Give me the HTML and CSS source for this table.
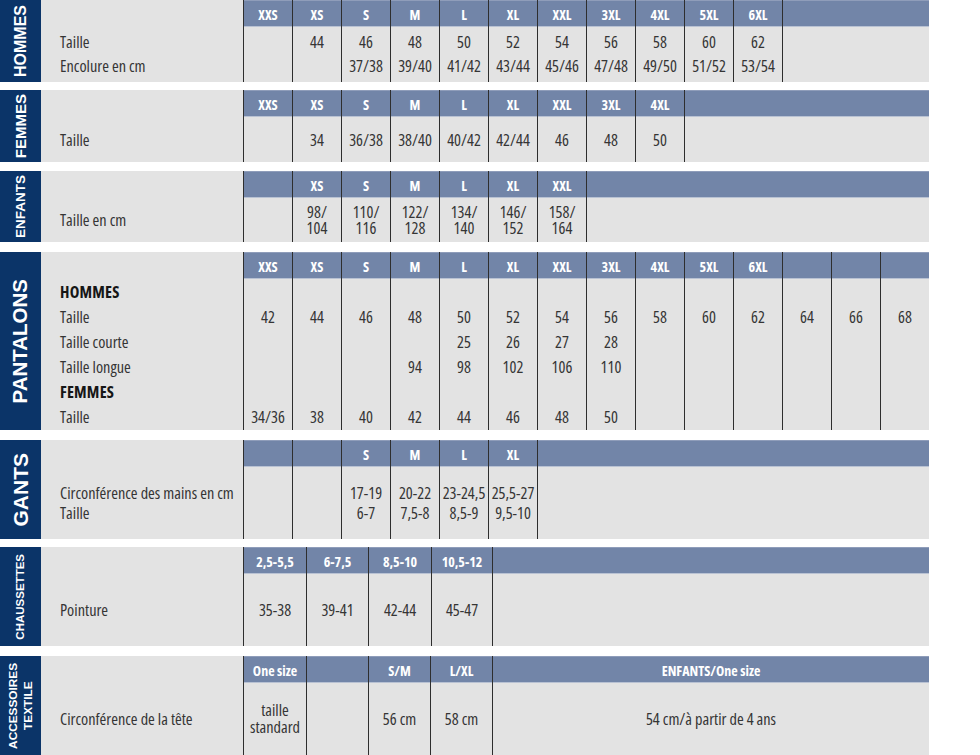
FILE: index.html
```html
<!DOCTYPE html>
<html lang="fr">
<head>
<meta charset="utf-8">
<title>Tableau des tailles</title>
<link rel="stylesheet" href="styles.css">
</head>
<body>
<div class="chart">

  <section class="sec s1">
    <div class="side"><span class="t-hommes">HOMMES</span></div>
    <div class="lab"><div class="h"></div><div class="b r24"><div class="r">Taille</div><div class="r">Encolure en cm</div></div></div>
    <div class="col"><div class="h">XXS</div><div class="b r24"><div class="r"></div><div class="r"></div></div></div>
    <div class="col"><div class="h">XS</div><div class="b r24"><div class="r">44</div><div class="r"></div></div></div>
    <div class="col"><div class="h">S</div><div class="b r24"><div class="r">46</div><div class="r">37/38</div></div></div>
    <div class="col"><div class="h">M</div><div class="b r24"><div class="r">48</div><div class="r">39/40</div></div></div>
    <div class="col"><div class="h">L</div><div class="b r24"><div class="r">50</div><div class="r">41/42</div></div></div>
    <div class="col"><div class="h">XL</div><div class="b r24"><div class="r">52</div><div class="r">43/44</div></div></div>
    <div class="col"><div class="h">XXL</div><div class="b r24"><div class="r">54</div><div class="r">45/46</div></div></div>
    <div class="col"><div class="h">3XL</div><div class="b r24"><div class="r">56</div><div class="r">47/48</div></div></div>
    <div class="col"><div class="h">4XL</div><div class="b r24"><div class="r">58</div><div class="r">49/50</div></div></div>
    <div class="col"><div class="h">5XL</div><div class="b r24"><div class="r">60</div><div class="r">51/52</div></div></div>
    <div class="col"><div class="h">6XL</div><div class="b r24"><div class="r">62</div><div class="r">53/54</div></div></div>
    <div class="col fill"><div class="h"></div><div class="b"></div></div>
  </section>

  <section class="sec s2">
    <div class="side"><span class="t-femmes">FEMMES</span></div>
    <div class="lab"><div class="h"></div><div class="b"><div class="r">Taille</div></div></div>
    <div class="col"><div class="h">XXS</div><div class="b"><div class="r"></div></div></div>
    <div class="col"><div class="h">XS</div><div class="b"><div class="r">34</div></div></div>
    <div class="col"><div class="h">S</div><div class="b"><div class="r">36/38</div></div></div>
    <div class="col"><div class="h">M</div><div class="b"><div class="r">38/40</div></div></div>
    <div class="col"><div class="h">L</div><div class="b"><div class="r">40/42</div></div></div>
    <div class="col"><div class="h">XL</div><div class="b"><div class="r">42/44</div></div></div>
    <div class="col"><div class="h">XXL</div><div class="b"><div class="r">46</div></div></div>
    <div class="col"><div class="h">3XL</div><div class="b"><div class="r">48</div></div></div>
    <div class="col"><div class="h">4XL</div><div class="b"><div class="r">50</div></div></div>
    <div class="col fill"><div class="h"></div><div class="b"></div></div>
  </section>

  <section class="sec s3">
    <div class="side"><span class="t-enfants">ENFANTS</span></div>
    <div class="lab"><div class="h"></div><div class="b"><div class="r">Taille en cm</div></div></div>
    <div class="col"><div class="h"></div><div class="b"></div></div>
    <div class="col"><div class="h">XS</div><div class="b"><div class="two">98/<br>104</div></div></div>
    <div class="col"><div class="h">S</div><div class="b"><div class="two">110/<br>116</div></div></div>
    <div class="col"><div class="h">M</div><div class="b"><div class="two">122/<br>128</div></div></div>
    <div class="col"><div class="h">L</div><div class="b"><div class="two">134/<br>140</div></div></div>
    <div class="col"><div class="h">XL</div><div class="b"><div class="two">146/<br>152</div></div></div>
    <div class="col"><div class="h">XXL</div><div class="b"><div class="two">158/<br>164</div></div></div>
    <div class="col fill"><div class="h"></div><div class="b"></div></div>
  </section>

  <section class="sec s4">
    <div class="side"><span class="t-pantalons">PANTALONS</span></div>
    <div class="lab"><div class="h"></div><div class="b r25"><div class="r strong">HOMMES</div><div class="r">Taille</div><div class="r">Taille courte</div><div class="r">Taille longue</div><div class="r strong">FEMMES</div><div class="r">Taille</div></div></div>
    <div class="col"><div class="h">XXS</div><div class="b r25"><div class="r"></div><div class="r">42</div><div class="r"></div><div class="r"></div><div class="r"></div><div class="r">34/36</div></div></div>
    <div class="col"><div class="h">XS</div><div class="b r25"><div class="r"></div><div class="r">44</div><div class="r"></div><div class="r"></div><div class="r"></div><div class="r">38</div></div></div>
    <div class="col"><div class="h">S</div><div class="b r25"><div class="r"></div><div class="r">46</div><div class="r"></div><div class="r"></div><div class="r"></div><div class="r">40</div></div></div>
    <div class="col"><div class="h">M</div><div class="b r25"><div class="r"></div><div class="r">48</div><div class="r"></div><div class="r">94</div><div class="r"></div><div class="r">42</div></div></div>
    <div class="col"><div class="h">L</div><div class="b r25"><div class="r"></div><div class="r">50</div><div class="r">25</div><div class="r">98</div><div class="r"></div><div class="r">44</div></div></div>
    <div class="col"><div class="h">XL</div><div class="b r25"><div class="r"></div><div class="r">52</div><div class="r">26</div><div class="r">102</div><div class="r"></div><div class="r">46</div></div></div>
    <div class="col"><div class="h">XXL</div><div class="b r25"><div class="r"></div><div class="r">54</div><div class="r">27</div><div class="r">106</div><div class="r"></div><div class="r">48</div></div></div>
    <div class="col"><div class="h">3XL</div><div class="b r25"><div class="r"></div><div class="r">56</div><div class="r">28</div><div class="r">110</div><div class="r"></div><div class="r">50</div></div></div>
    <div class="col"><div class="h">4XL</div><div class="b r25"><div class="r"></div><div class="r">58</div><div class="r"></div><div class="r"></div><div class="r"></div><div class="r"></div></div></div>
    <div class="col"><div class="h">5XL</div><div class="b r25"><div class="r"></div><div class="r">60</div><div class="r"></div><div class="r"></div><div class="r"></div><div class="r"></div></div></div>
    <div class="col"><div class="h">6XL</div><div class="b r25"><div class="r"></div><div class="r">62</div><div class="r"></div><div class="r"></div><div class="r"></div><div class="r"></div></div></div>
    <div class="col"><div class="h"></div><div class="b r25"><div class="r"></div><div class="r">64</div><div class="r"></div><div class="r"></div><div class="r"></div><div class="r"></div></div></div>
    <div class="col"><div class="h"></div><div class="b r25"><div class="r"></div><div class="r">66</div><div class="r"></div><div class="r"></div><div class="r"></div><div class="r"></div></div></div>
    <div class="col"><div class="h"></div><div class="b r25"><div class="r"></div><div class="r">68</div><div class="r"></div><div class="r"></div><div class="r"></div><div class="r"></div></div></div>
  </section>

  <section class="sec s5">
    <div class="side"><span class="t-gants">GANTS</span></div>
    <div class="lab"><div class="h"></div><div class="b r20"><div class="r">Circonférence des mains en cm</div><div class="r">Taille</div></div></div>
    <div class="col"><div class="h"></div><div class="b"></div></div>
    <div class="col"><div class="h"></div><div class="b"></div></div>
    <div class="col"><div class="h">S</div><div class="b r20"><div class="r">17-19</div><div class="r">6-7</div></div></div>
    <div class="col"><div class="h">M</div><div class="b r20"><div class="r">20-22</div><div class="r">7,5-8</div></div></div>
    <div class="col"><div class="h">L</div><div class="b r20"><div class="r">23-24,5</div><div class="r">8,5-9</div></div></div>
    <div class="col"><div class="h">XL</div><div class="b r20"><div class="r">25,5-27</div><div class="r">9,5-10</div></div></div>
    <div class="col fill"><div class="h"></div><div class="b"></div></div>
  </section>

  <section class="sec s6">
    <div class="side"><span class="t-chaussettes">CHAUSSETTES</span></div>
    <div class="lab"><div class="h"></div><div class="b"><div class="r">Pointure</div></div></div>
    <div class="col w63"><div class="h">2,5-5,5</div><div class="b"><div class="r">35-38</div></div></div>
    <div class="col w62"><div class="h">6-7,5</div><div class="b"><div class="r">39-41</div></div></div>
    <div class="col w63"><div class="h">8,5-10</div><div class="b"><div class="r">42-44</div></div></div>
    <div class="col w61"><div class="h">10,5-12</div><div class="b"><div class="r">45-47</div></div></div>
    <div class="col fill"><div class="h"></div><div class="b"></div></div>
  </section>

  <section class="sec s7">
    <div class="side"><span class="t-acc">ACCESSOIRES<br>TEXTILE</span></div>
    <div class="lab"><div class="h"></div><div class="b"><div class="r">Circonférence de la tête</div></div></div>
    <div class="col w63"><div class="h">One size</div><div class="b"><div class="two tall">taille<br>standard</div></div></div>
    <div class="col w62"><div class="h"></div><div class="b"></div></div>
    <div class="col w62"><div class="h">S/M</div><div class="b"><div class="r">56 cm</div></div></div>
    <div class="col w62"><div class="h">L/XL</div><div class="b"><div class="r">58 cm</div></div></div>
    <div class="col fill"><div class="h">ENFANTS/One size</div><div class="b"><div class="r">54 cm/à partir de 4 ans</div></div></div>
  </section>

</div>
</body>
</html>
```

FILE: styles.css
```css
* {
  box-sizing: border-box;
}

body {
  margin: 0;
  background: #ffffff;
  font-family: "Open Sans", "DejaVu Sans Condensed", sans-serif;
  font-stretch: 75%;
  font-size: 16.3px;
  color: #353535;
}

.chart {
  width: 929px;
  display: flex;
  flex-direction: column;
}

.sec {
  display: flex;
  background: #e3e3e3;
  flex: none;
}

.s1 { height: 82px; }
.s2 { height: 72px; margin-top: 8px; }
.s3 { height: 71px; margin-top: 9px; }
.s4 { height: 178px; margin-top: 10px; }
.s5 { height: 99px; margin-top: 10px; }
.s6 { height: 99px; margin-top: 8px; }
.s7 { height: 99px; margin-top: 10px; }

.side {
  width: 41px;
  flex: none;
  background: #0b3468;
  color: #ffffff;
  display: flex;
  align-items: center;
  justify-content: center;
}

.side span {
  writing-mode: vertical-rl;
  transform: rotate(180deg);
  font-family: "Liberation Sans", "DejaVu Sans", sans-serif;
  font-stretch: normal;
  font-weight: 700;
  text-align: center;
  white-space: nowrap;
  line-height: 1;
}

.t-hommes { font-size: 16px; }
.t-femmes { font-size: 15px; }
.t-enfants { font-size: 13.5px; }
.t-pantalons { font-size: 20.5px; }
.t-gants { font-size: 21px; }
.t-chaussettes { font-size: 11.5px; }
.side .t-acc { font-size: 11.8px; line-height: 15px; }

.lab {
  width: 202px;
  flex: none;
  display: flex;
  flex-direction: column;
}

.col {
  width: 49px;
  flex: none;
  border-left: 1px solid #2e2e2e;
  display: flex;
  flex-direction: column;
  text-align: center;
}

.w61 { width: 61px; }
.w62 { width: 62px; }
.w63 { width: 63px; }

.fill {
  flex: 1 1 auto;
  width: auto;
}

.h {
  height: 27px;
  flex: none;
  background: #7285a8;
  color: #ffffff;
  font-weight: 700;
  font-size: 14px;
  display: flex;
  align-items: center;
  justify-content: center;
  padding-top: 2px;
  white-space: nowrap;
}

.col .h {
  border-top: 1px solid #8f9dba;
  border-bottom: 1px solid #b9c2d3;
}

.lab .h {
  background: transparent;
}

.b {
  flex: 1 1 auto;
  display: flex;
  flex-direction: column;
  justify-content: center;
}

.s1 .b {
  padding-bottom: 2px;
}

.lab .b {
  padding-left: 19px;
  text-align: left;
}

.r {
  white-space: nowrap;
  line-height: 20px;
}

.r24 .r { height: 24px; line-height: 24px; }
.r25 .r { height: 25px; line-height: 25px; }
.r20 .r { height: 20px; line-height: 20px; }

.two {
  line-height: 16px;
}

.two.tall {
  line-height: 17px;
}

.strong {
  font-weight: 700;
  color: #161616;
  letter-spacing: 0.2px;
}
```
